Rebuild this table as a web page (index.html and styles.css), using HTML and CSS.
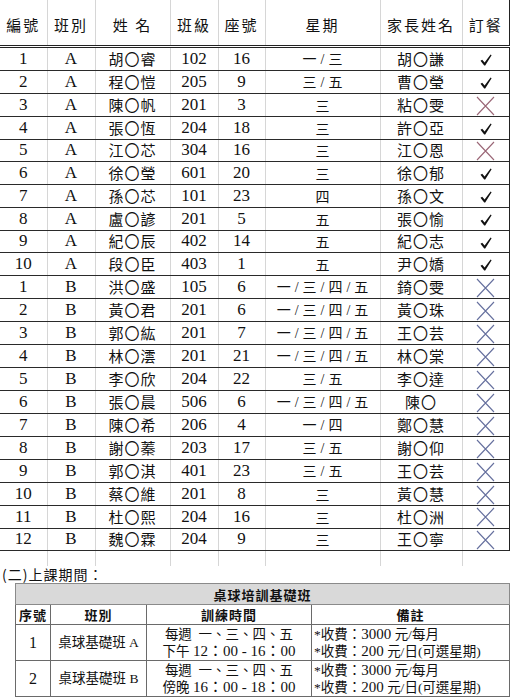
FILE: index.html
```html
<!DOCTYPE html>
<html lang="zh-Hant">
<head>
<meta charset="utf-8">
<link rel="stylesheet" href="styles.css">
</head>
<body>
<table class="roster">
  <colgroup>
    <col class="c1"><col class="c2"><col class="c3"><col class="c4"><col class="c5"><col class="c6"><col class="c7"><col class="c8">
  </colgroup>
  <thead>
    <tr class="head">
      <th>編號</th><th>班別</th><th>姓 名</th><th>班級</th><th>座號</th><th>星期</th><th>家長姓名</th><th>訂餐</th>
    </tr>
  </thead>
  <tbody id="rows"></tbody>
</table>
<p class="section">(二)上課期間：</p>
<table class="course">
  <colgroup>
    <col class="k1"><col class="k2"><col class="k3"><col class="k4">
  </colgroup>
  <tr class="title"><th colspan="4">桌球培訓基礎班</th></tr>
  <tr class="khead"><th>序號</th><th>班別</th><th>訓練時間</th><th>備註</th></tr>
  <tr class="krow">
    <td class="knum">1</td>
    <td>桌球基礎班 A</td>
    <td>每週&nbsp; 一、三、四、五<br>下午 <span class="dg">12：00 - 16：00</span></td>
    <td class="note">*收費：<span class="dg">3000</span> 元/每月<br>*收費：<span class="dg">200</span> 元/日(可選星期)</td>
  </tr>
  <tr class="krow">
    <td class="knum">2</td>
    <td>桌球基礎班 B</td>
    <td>每週&nbsp; 一、三、四、五<br>傍晚 <span class="dg">16：00 - 18：00</span></td>
    <td class="note">*收費：<span class="dg">3000</span> 元/每月<br>*收費：<span class="dg">200</span> 元/日(可選星期)</td>
  </tr>
</table>
<script src="app.js"></script>
</body>
</html>
```

FILE: app.js
```js
const data = [
  ["1","A","胡〇睿","102","16","一/三","胡〇謙",1],
  ["2","A","程〇愷","205","9","三/五","曹〇瑩",1],
  ["3","A","陳〇帆","201","3","三","粘〇雯",0],
  ["4","A","張〇恆","204","18","三","許〇亞",1],
  ["5","A","江〇芯","304","16","三","江〇恩",0],
  ["6","A","徐〇瑩","601","20","三","徐〇郁",1],
  ["7","A","孫〇芯","101","23","四","孫〇文",1],
  ["8","A","盧〇諺","201","5","五","張〇愉",1],
  ["9","A","紀〇辰","402","14","五","紀〇志",1],
  ["10","A","段〇臣","403","1","五","尹〇嬌",1],
  ["1","B","洪〇盛","105","6","一/三/四/五","錡〇雯",0],
  ["2","B","黃〇君","201","6","一/三/四/五","黃〇珠",0],
  ["3","B","郭〇紘","201","7","一/三/四/五","王〇芸",0],
  ["4","B","林〇澐","201","21","一/三/四/五","林〇棠",0],
  ["5","B","李〇欣","204","22","三/五","李〇達",0],
  ["6","B","張〇晨","506","6","一/三/四/五","陳〇",0],
  ["7","B","陳〇希","206","4","一/四","鄭〇慧",0],
  ["8","B","謝〇蓁","203","17","三/五","謝〇仰",0],
  ["9","B","郭〇淇","401","23","三/五","王〇芸",0],
  ["10","B","蔡〇維","201","8","三","黃〇慧",0],
  ["11","B","杜〇熙","204","16","三","杜〇洲",0],
  ["12","B","魏〇霖","204","9","三","王〇寧",0]
];
const check = '<svg class="mark" width="12" height="12" viewBox="0 0 12 12"><polygon points="0.5,6.8 2.2,5.8 4.6,8.6 10.6,0.4 11.6,1.3 5.2,11.6 4.2,11.6" fill="#111"/></svg>';
const cross = cls => '<svg class="mark ' + cls + '" width="19" height="20" viewBox="0 0 19 20"><path d="M1 1 L18 19 M18 1 L1 19" stroke-width="1.1" fill="none"/></svg>';
const tbody = document.getElementById("rows");
let html = "";
for (const r of data) {
  const days = r[5].split("/").join('<span class="sl">/</span>');
  const mark = r[7] ? check : cross(r[1] === "A" ? "xa" : "xb");
  html += '<tr class="row"><td class="num">' + r[0] + '</td><td class="num">' + r[1] +
    '</td><td class="cjk">' + r[2] + '</td><td class="num">' + r[3] + '</td><td class="num">' + r[4] +
    '</td><td class="cjk days">' + days + '</td><td class="cjk">' + r[6] + '</td><td class="meal">' + mark + '</td></tr>';
}
html += '<tr class="blank"><td></td><td></td><td></td><td></td><td></td><td></td><td></td><td></td></tr>';
tbody.innerHTML = html;
```

FILE: styles.css
```css
html, body {
  margin: 0;
  padding: 0;
  background: #fff;
}
body {
  width: 510px;
  font-family: "Liberation Serif", "Noto Sans CJK TC", serif;
  color: #111;
}
.roster {
  border-collapse: collapse;
  table-layout: fixed;
  width: 510px;
}
.c1 { width: 47px; }
.c2 { width: 48px; }
.c3 { width: 75px; }
.c4 { width: 48px; }
.c5 { width: 47px; }
.c6 { width: 115px; }
.c7 { width: 82px; }
.c8 { width: 48px; }
.roster th,
.roster td {
  padding: 0;
  text-align: center;
  border-left: 1px solid #d6d6d6;
  border-right: 1px solid #d6d6d6;
  overflow: hidden;
  white-space: nowrap;
}
.roster th:first-child,
.roster td:first-child {
  border-left: none;
}
.roster .head th {
  height: 41px;
  font-family: "Noto Sans CJK TC", sans-serif;
  font-weight: 400;
  font-size: 15px;
  letter-spacing: 2px;
  padding-top: 4px;
  border-bottom: 3px double #222;
}
.roster .head th:last-child,
.roster .row td:last-child {
  border-right: 2px solid #222;
}
.roster .row td {
  height: 21.75px;
  border-bottom: 1px solid #2a2a2a;
  line-height: 20px;
}
.num {
  font-size: 17px;
}
.cjk {
  font-family: "Noto Sans CJK TC", sans-serif;
  font-size: 15px;
  letter-spacing: 1px;
}
.days {
  font-size: 14px;
  letter-spacing: 0;
}
.sl {
  font-family: "Liberation Serif", serif;
  display: inline-block;
  margin: 0 4px;
}
.meal {
  line-height: 0;
}
.mark {
  display: inline-block;
  vertical-align: middle;
}
.xa path { stroke: #9a6676; }
.xb path { stroke: #66709e; }
.roster .blank td {
  height: 15px;
}
.section {
  margin: 0;
  height: 17px;
  line-height: 17px;
  padding-left: 2px;
  font-family: "Noto Sans CJK TC", sans-serif;
  font-size: 14px;
  letter-spacing: 1px;
}
.course {
  margin-left: 15px;
  width: 494px;
  border-collapse: collapse;
  table-layout: fixed;
  font-family: "Liberation Serif", "Noto Sans CJK TC", serif;
  font-size: 13.5px;
}
.k1 { width: 35px; }
.k2 { width: 96px; }
.k3 { width: 165px; }
.k4 { width: 198px; }
.course th,
.course td {
  border: 1px solid #6a6a6a;
  padding: 0;
  text-align: center;
  white-space: nowrap;
}
.course .title th {
  height: 20px;
  background: #d9d9d9;
  font-family: "Noto Sans CJK TC", sans-serif;
  font-weight: 700;
  font-size: 13px;
  letter-spacing: 1px;
  border-color: #8a8a8a;
}
.course .khead th {
  height: 18px;
  font-family: "Noto Sans CJK TC", sans-serif;
  font-weight: 700;
  font-size: 13px;
  letter-spacing: 1px;
}
.course .krow td {
  height: 35px;
  line-height: 17px;
}
.course .knum {
  font-size: 16px;
}
.course .dg {
  font-size: 15px;
}
.course .note {
  text-align: left;
  padding-left: 2px;
}
```
